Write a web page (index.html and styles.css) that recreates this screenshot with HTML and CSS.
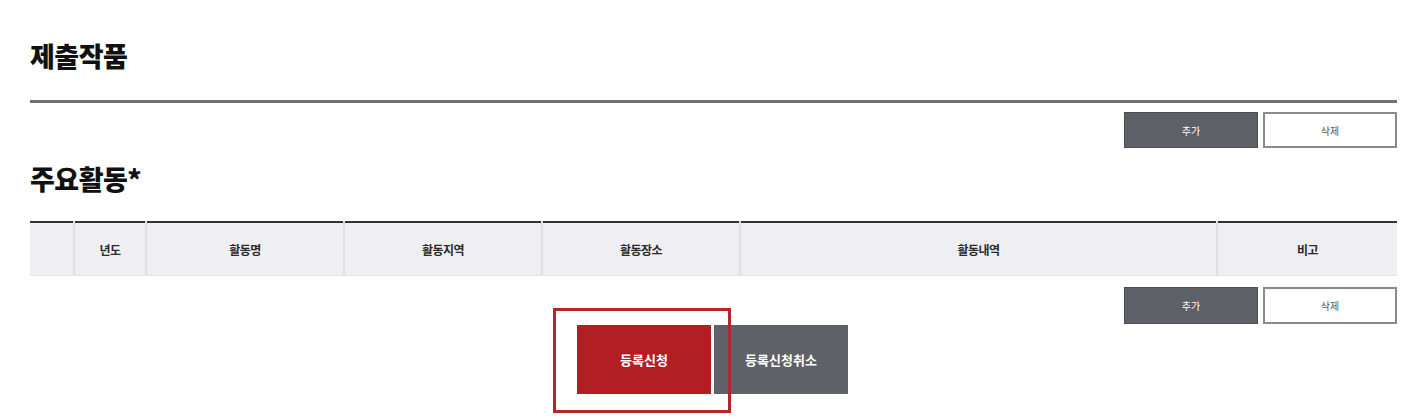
FILE: index.html
```html
<!DOCTYPE html>
<html lang="ko">
<head>
    <meta charset="UTF-8">
    <meta name="viewport" content="width=device-width, initial-scale=1.0">
    <title>제출작품 / 주요활동</title>
    <link rel="stylesheet" href="styles.css">
</head>
<body>
    <div class="container">
        <h2 class="section-title first">제출작품</h2>
        <div class="btn-row">
            <button type="button" class="btn-small dark">추가</button>
            <button type="button" class="btn-small light">삭제</button>
        </div>

        <h2 class="section-title">주요활동*</h2>
        <table class="activity-table">
            <colgroup>
                <col style="width:44px">
                <col style="width:72px">
                <col style="width:198px">
                <col style="width:198px">
                <col style="width:198px">
                <col style="width:477px">
                <col style="width:180px">
            </colgroup>
            <thead>
                <tr>
                    <th></th>
                    <th>년도</th>
                    <th>활동명</th>
                    <th>활동지역</th>
                    <th>활동장소</th>
                    <th>활동내역</th>
                    <th>비고</th>
                </tr>
            </thead>
        </table>
        <div class="btn-row second">
            <button type="button" class="btn-small dark">추가</button>
            <button type="button" class="btn-small light">삭제</button>
        </div>

        <div class="submit-row">
            <div class="highlight-wrap">
                <button type="button" class="btn-big red">등록신청</button>
                <span class="highlight"></span>
            </div>
            <button type="button" class="btn-big gray">등록신청취소</button>
        </div>
    </div>
</body>
</html>
```

FILE: styles.css
```css
body {
    margin: 0;
    font-family: "Noto Sans CJK KR", "Noto Sans", sans-serif;
    background: #fff;
    color: #111;
}
.container {
    width: 1367px;
    margin-left: 30px;
    padding-bottom: 27px;
}
.section-title {
    margin: 16px 0 0;
    font-size: 27px;
    line-height: 30px;
    font-weight: 800;
    color: #111;
    letter-spacing: -0.5px;
}
.section-title.first {
    margin: 0;
    padding: 41px 0 29px;
    border-bottom: 3px solid #727272;
}
.btn-row {
    display: flex;
    justify-content: flex-end;
    gap: 5px;
    margin-top: 9px;
}
.btn-row.second {
    margin-top: 11px;
}
.btn-small {
    width: 134px;
    height: 36px;
    box-sizing: border-box;
    font-family: inherit;
    font-size: 10px;
    cursor: pointer;
}
.btn-row.second .btn-small {
    height: 37px;
}
.btn-small.dark {
    background: #5d6067;
    color: #fff;
    border: 1px solid #4a4d52;
}
.btn-small.light {
    background: #fff;
    color: #555;
    border: 2px solid #8a8a8a;
}
.activity-table {
    width: 100%;
    margin-top: 27px;
    border-collapse: collapse;
    table-layout: fixed;
    border-top: 2px solid #333;
}
.activity-table th {
    height: 52px;
    padding: 0;
    background: #efeff1;
    border-left: 2px solid #e0e0e2;
    border-bottom: 1px solid #e4e4e6;
    font-size: 12px;
    font-weight: 700;
    color: #2a2a2a;
    letter-spacing: -0.5px;
}
.activity-table th:first-child {
    border-left: none;
}
.submit-row {
    display: flex;
    justify-content: center;
    gap: 3px;
    margin-top: 1px;
    margin-left: -2px;
}
.highlight-wrap {
    position: relative;
}
.btn-big {
    display: block;
    width: 134px;
    height: 69px;
    border: none;
    font-family: inherit;
    font-size: 13px;
    font-weight: 700;
    color: #fff;
    cursor: pointer;
}
.btn-big.red {
    background: #b31e24;
}
.btn-big.gray {
    background: #5e6168;
}
.highlight {
    position: absolute;
    top: -17px;
    left: -24px;
    width: 178px;
    height: 105px;
    box-sizing: border-box;
    border: 3px solid #b5262c;
    pointer-events: none;
}
```
